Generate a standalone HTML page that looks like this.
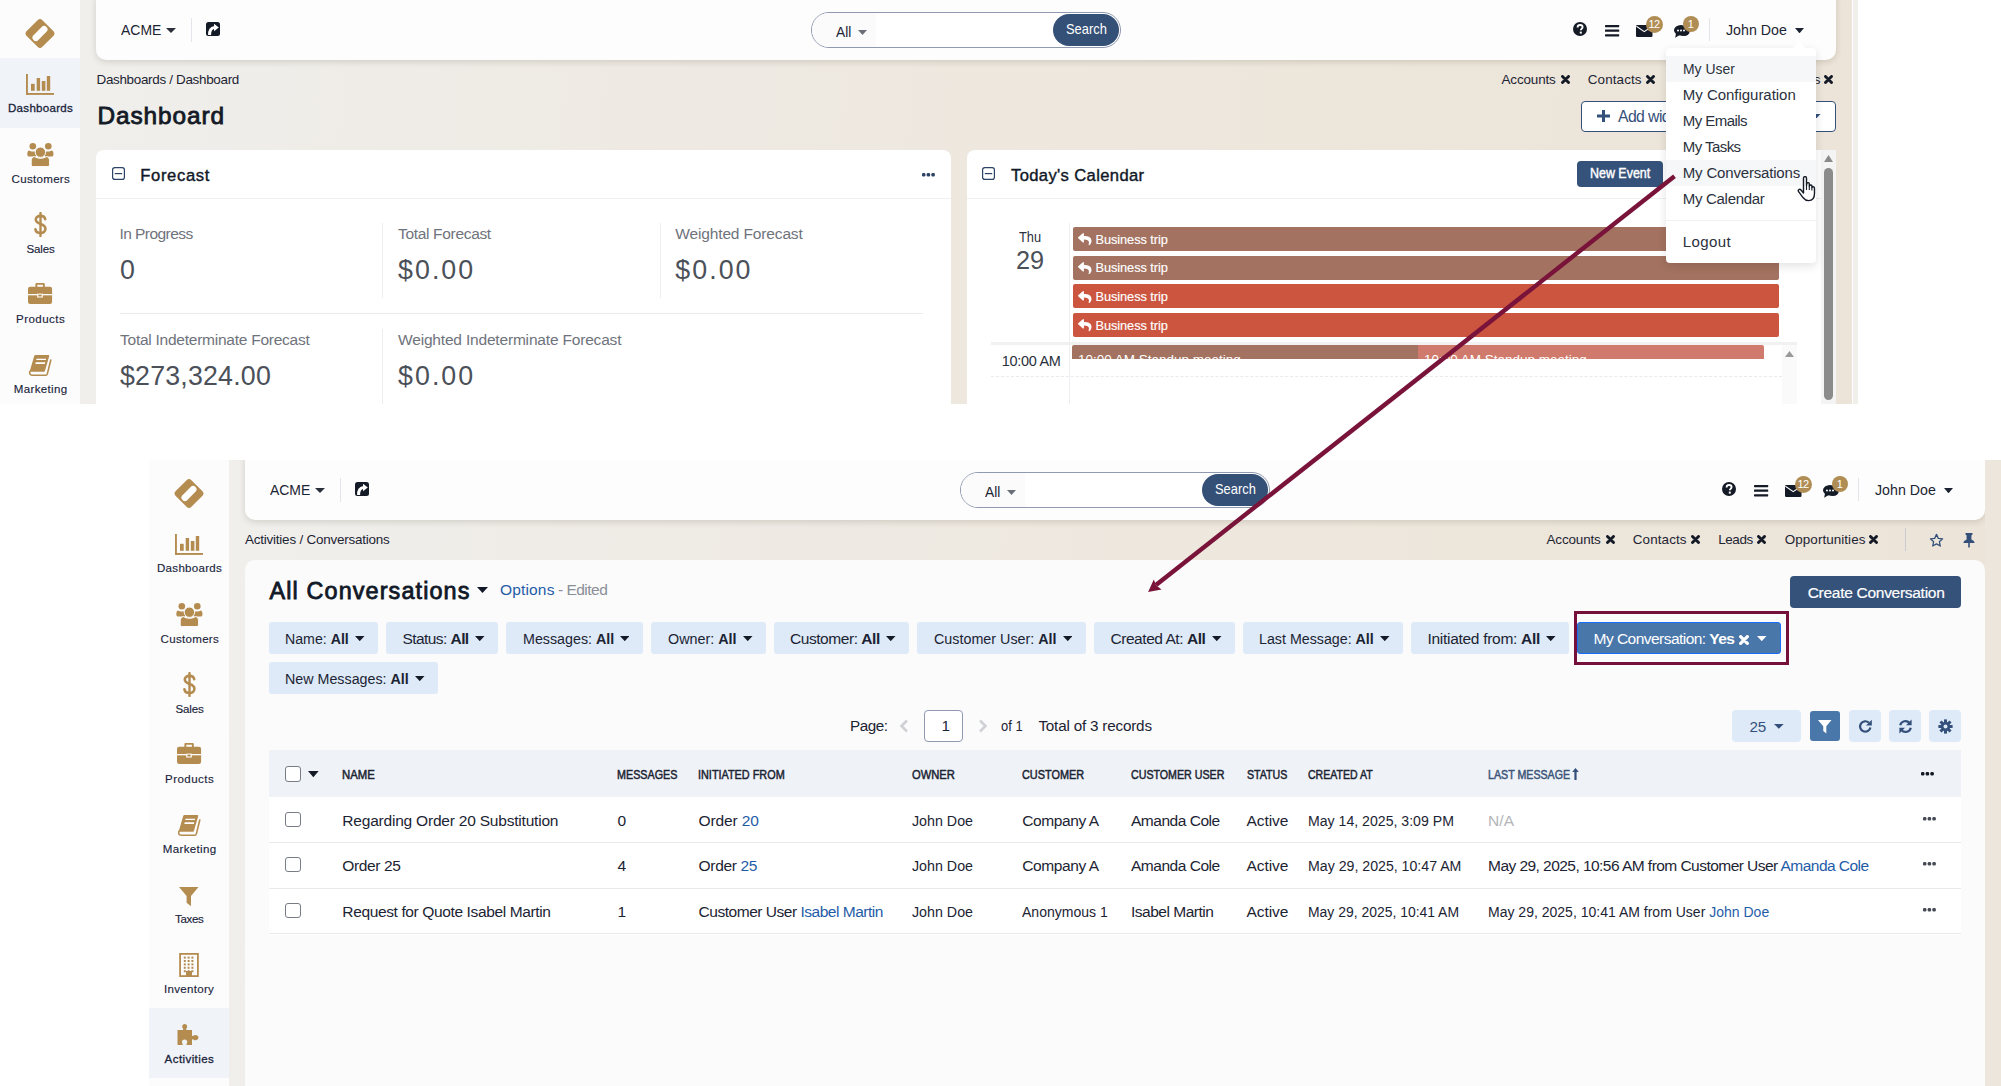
<!DOCTYPE html><html><head><meta charset="utf-8"><style>
*{margin:0;padding:0}
html,body{width:2001px;height:1086px;overflow:hidden;background:#ffffff;font-family:"Liberation Sans",sans-serif}
.r{position:absolute;display:block}
.t{position:absolute;white-space:nowrap;font-family:"Liberation Sans",sans-serif}
.t b{font-weight:700}
.shot{position:absolute;overflow:hidden}
.lk{color:#1f5ca8}
</style></head><body><div class="shot" style="left:0;top:0;width:1852px;height:404px;"><div class="r" style="left:80px;top:0px;width:1772px;height:404px;background:linear-gradient(95deg,#f0efec 0%,#eee9e2 35%,#ede6db 70%,#ece4d8 100%);"></div><div class="r" style="left:0px;top:0px;width:80px;height:404px;background:#fcfcfd;"></div><svg class="r" style="left:25px;top:18px" width="30" height="31" viewBox="0 0 30 31"><g transform="translate(15 15.5) rotate(45)"><rect x="-11.1" y="-11.1" width="22.2" height="22.2" rx="3.4" fill="#b48c50"/><rect x="-3.4" y="-9.2" width="6.8" height="18.4" rx="3.4" fill="#fff"/></g></svg><div class="r" style="left:0px;top:57.5px;width:80px;height:70.8px;background:#f0f3f8;"></div><svg class="r" style="left:26px;top:74px" width="28" height="21" viewBox="0 0 28 21"><rect x="0" y="0" width="1.9" height="21" fill="#b48c50"/><rect x="0" y="19" width="28" height="1.9" fill="#b48c50"/><rect x="5" y="9.8" width="3.7" height="7" fill="#b48c50"/><rect x="10.7" y="4" width="3.4" height="12.8" fill="#b48c50"/><rect x="15.8" y="7" width="3.6" height="9.8" fill="#b48c50"/><rect x="20.8" y="2" width="3.4" height="14.8" fill="#b48c50"/></svg><div id="t1" class="t " style="left:8.00px;top:103.01px;font-size:11.55px;line-height:11.55px;color:#19233a;-webkit-text-stroke:0.29px #19233a;letter-spacing:0.281px;">Dashboards</div><svg class="r" style="left:26.5px;top:141.5px" width="27" height="25" viewBox="0 0 27 25"><circle cx="5.8" cy="4.3" r="3.3" fill="#b48c50"/><circle cx="21.3" cy="4.3" r="3.3" fill="#b48c50"/><path d="M0.3 12.5 C0.3 10.2 1 8.6 2.2 8.6 C3 9.3 4.5 9.6 6 9.6 C7.3 9.6 8.4 9.4 9 8.9 C9.6 9.8 9.8 11 9.8 12.5 C9.8 13.7 9 14.6 7.8 14.6 H2.3 C1.1 14.6 0.3 13.7 0.3 12.5 Z" fill="#b48c50"/><path d="M26.5 12.5 C26.5 10.2 25.8 8.6 24.6 8.6 C23.8 9.3 22.3 9.6 20.8 9.6 C19.5 9.6 18.4 9.4 17.8 8.9 C17.2 9.8 17 11 17 12.5 C17 13.7 17.8 14.6 19 14.6 H24.5 C25.7 14.6 26.5 13.7 26.5 12.5 Z" fill="#b48c50"/><path d="M4.2 22.3 V18.8 C4.2 16.4 5.4 14.8 7.4 14.6 C9 15.6 11.1 16.3 13.4 16.3 C15.7 16.3 17.8 15.6 19.4 14.6 C21.4 14.8 22.6 16.4 22.6 18.8 V22.3 C22.6 23.6 21.8 24.6 20.4 24.6 H6.4 C5 24.6 4.2 23.6 4.2 22.3 Z" fill="#b48c50" stroke="#fff" stroke-width="1"/><circle cx="13.4" cy="10.2" r="5.2" fill="#b48c50" stroke="#fff" stroke-width="1"/></svg><div id="t2" class="t " style="left:11.60px;top:174.01px;font-size:11.55px;line-height:11.55px;color:#19233a;-webkit-text-stroke:0.14px #19233a;letter-spacing:0.295px;">Customers</div><svg class="r" style="left:33.5px;top:212px" width="13" height="25" viewBox="0 0 13 25"><path d="M6.5 1 V24" stroke="#b48c50" stroke-width="2.4" stroke-linecap="round"/><path d="M11.2 7.2 C10.8 5 9 3.9 6.4 3.9 C3.6 3.9 1.8 5.4 1.8 7.6 C1.8 10.2 4.2 11.2 6.6 12 C9.2 12.8 11.4 14 11.4 16.8 C11.4 19.4 9.2 21 6.5 21 C3.6 21 1.8 19.6 1.4 17.2" fill="none" stroke="#b48c50" stroke-width="2.6" stroke-linecap="round"/></svg><div id="t3" class="t " style="left:26.40px;top:244.01px;font-size:11.55px;line-height:11.55px;color:#19233a;-webkit-text-stroke:0.14px #19233a;letter-spacing:-0.148px;">Sales</div><svg class="r" style="left:27.8px;top:283px" width="25" height="21" viewBox="0 0 25 21"><path d="M7.4 4 V1.2 C7.4 0.5 7.9 0 8.6 0 H15.5 C16.2 0 16.8 0.5 16.8 1.2 V4 H14.9 V1.8 H9.3 V4 Z" fill="#b48c50"/><rect x="0" y="3.7" width="24.1" height="17.3" rx="2.2" fill="#b48c50"/><rect x="0" y="11" width="24.1" height="1.3" fill="#fff"/><rect x="9.2" y="10.6" width="5.6" height="3.9" fill="#fff"/><rect x="10.4" y="11.6" width="3.2" height="1.9" fill="#b48c50"/></svg><div id="t4" class="t " style="left:16.00px;top:314.01px;font-size:11.55px;line-height:11.55px;color:#19233a;-webkit-text-stroke:0.14px #19233a;letter-spacing:0.461px;">Products</div><svg class="r" style="left:29px;top:355px" width="23" height="21.5" viewBox="0 0 23 21.5"><path d="M5.2 0.9 C5.4 0.3 5.9 0 6.5 0 H19.2 C19.9 0 20.4 0.6 20.2 1.3 L15.9 16.1 C15.8 16.5 15.4 16.8 15 16.8 H0.6 Z" fill="#b48c50"/><path d="M7.6 3.8 H17.2 L16.8 5.1 H7.2 Z" fill="#fff"/><path d="M6.8 7.2 H16.3 L15.8 8.9 H6.3 Z" fill="#fff"/><path d="M0.9 16.4 C0.2 18.8 1.2 20.2 3 20.2 H16.8 C17.6 20.2 18.1 19.8 18.3 19.1 L21.8 5" fill="none" stroke="#b48c50" stroke-width="1.6" stroke-linecap="round"/></svg><div id="t5" class="t " style="left:13.80px;top:384.01px;font-size:11.55px;line-height:11.55px;color:#19233a;-webkit-text-stroke:0.14px #19233a;letter-spacing:0.325px;">Marketing</div><div class="r" style="left:96px;top:-10px;width:1740px;height:70px;background:#fdfdfd;border-radius:10px;box-shadow:0 2px 6px rgba(80,70,50,0.18)"></div><div id="t6" class="t " style="left:120.50px;top:22.01px;font-size:15.54px;line-height:15.54px;color:#1c2433;transform:scaleX(0.8981);transform-origin:0 0;">ACME</div><svg class="r" style="left:166px;top:28px" width="10" height="5" viewBox="0 0 10 5" preserveAspectRatio="none"><path d="M0 0 H10 L5 5 Z" fill="#2a2f3a"/></svg><div class="r" style="left:191px;top:18px;width:1px;height:23.5px;background:#e3e5ea;"></div><svg class="r" style="left:205.5px;top:22px" width="14" height="14" viewBox="0 0 14 14"><rect x="0" y="0" width="14" height="14" rx="2.5" fill="#141a26"/><path d="M8 1.7 L12.8 5.5 L8 9.3 Z" fill="#fff"/><path d="M3.6 13 C3.4 8.6 5 5.5 9 5.5" fill="none" stroke="#fff" stroke-width="3"/></svg><div class="r" style="left:811px;top:12px;width:310px;height:36px;box-sizing:border-box;border:1px solid #8f9ab0;border-radius:18px;background:#fff"></div><div class="r" style="left:812px;top:13px;width:64px;height:34px;background:#fbfbfc;border-radius:17px 0 0 17px"></div><div id="t7" class="t " style="left:835.50px;top:24.01px;font-size:15.54px;line-height:15.54px;color:#1c2433;transform:scaleX(0.8862);transform-origin:0 0;">All</div><svg class="r" style="left:857.8px;top:29.5px" width="9" height="5" viewBox="0 0 10 5" preserveAspectRatio="none"><path d="M0 0 H10 L5 5 Z" fill="#6b6f78"/></svg><div class="r" style="left:1053px;top:14px;width:66px;height:32px;border-radius:16px;background:#355077"></div><div id="t8" class="t " style="left:1066.00px;top:23.01px;font-size:13.86px;line-height:13.86px;color:#ffffff;transform:scaleX(0.9289);transform-origin:0 0;">Search</div><svg class="r" style="left:1573.2px;top:22.2px" width="14" height="14" viewBox="0 0 14 14"><circle cx="7" cy="7" r="7" fill="#141a26"/><path d="M4.6 5.4 C4.6 3.9 5.7 3 7.1 3 C8.6 3 9.6 3.9 9.6 5.1 C9.6 6.8 7.8 6.9 7.8 8.3" fill="none" stroke="#fff" stroke-width="1.9"/><rect x="6.8" y="9.6" width="2" height="2" fill="#fff"/></svg><svg class="r" style="left:1605px;top:24.7px" width="15" height="12" viewBox="0 0 15 12"><rect x="0" y="0" width="14.2" height="2.2" rx="0.6" fill="#141a26"/><rect x="0" y="4.6" width="14.2" height="2.2" rx="0.6" fill="#141a26"/><rect x="0" y="9.2" width="14.2" height="2.2" rx="0.6" fill="#141a26"/></svg><svg class="r" style="left:1635.7px;top:24.7px" width="17" height="12" viewBox="0 0 17 12"><rect x="0" y="0" width="16.5" height="12" rx="1.2" fill="#141a26"/><path d="M0.4 1.2 L8.25 6.6 L16.1 1.2" fill="none" stroke="#fff" stroke-width="1.1"/></svg><div class="r" style="left:1645.5px;top:15.8px;width:17.0px;height:17.0px;border-radius:50%;background:#b08d54;color:#fff;font-size:11px;line-height:17.0px;text-align:center;letter-spacing:-0.5px">12</div><svg class="r" style="left:1674px;top:24.7px" width="16" height="13" viewBox="0 0 16 13"><ellipse cx="7" cy="5.3" rx="7" ry="5.3" fill="#141a26"/><path d="M2 8.5 L1.2 12.8 L6 9.8 Z" fill="#141a26"/><ellipse cx="10" cy="6.5" rx="5.7" ry="4.6" fill="#141a26"/><circle cx="4" cy="5.6" r="1" fill="#fff"/><circle cx="7" cy="5.6" r="1" fill="#fff"/><circle cx="10" cy="5.6" r="1" fill="#fff"/></svg><div class="r" style="left:1682.5px;top:16.3px;width:16px;height:16px;border-radius:50%;background:#b08d54;color:#fff;font-size:11px;line-height:16px;text-align:center;letter-spacing:-0.5px">1</div><div class="r" style="left:1709px;top:18px;width:1px;height:23px;background:#e3e5ea;"></div><div id="t9" class="t " style="left:1725.70px;top:22.01px;font-size:15.54px;line-height:15.54px;color:#1c2433;transform:scaleX(0.9143);transform-origin:0 0;">John Doe</div><svg class="r" style="left:1794.6px;top:27.7px" width="9" height="5.3" viewBox="0 0 10 5" preserveAspectRatio="none"><path d="M0 0 H10 L5 5 Z" fill="#1c2433"/></svg><div id="t10" class="t " style="left:96.50px;top:73.01px;font-size:13.44px;line-height:13.44px;color:#1c2433;letter-spacing:-0.315px;">Dashboards / Dashboard</div><div id="t11" class="t " style="left:97.40px;top:104.01px;font-size:24.36px;line-height:24.36px;color:#141a26;-webkit-text-stroke:0.85px #141a26;letter-spacing:0.929px;">Dashboard</div><div id="t12" class="t " style="left:1501.50px;top:73.01px;font-size:13.44px;line-height:13.44px;color:#1c2433;letter-spacing:-0.141px;">Accounts</div><svg class="r" style="left:1560.5px;top:75.3px" width="9" height="9" viewBox="0 0 9 9"><path d="M1.5 1.5 L7.5 7.5 M7.5 1.5 L1.5 7.5" stroke="#141a26" stroke-width="2.9" stroke-linecap="round"/></svg><div id="t13" class="t " style="left:1587.80px;top:73.01px;font-size:13.44px;line-height:13.44px;color:#1c2433;letter-spacing:0.108px;">Contacts</div><svg class="r" style="left:1645.7px;top:75.3px" width="9" height="9" viewBox="0 0 9 9"><path d="M1.5 1.5 L7.5 7.5 M7.5 1.5 L1.5 7.5" stroke="#141a26" stroke-width="2.9" stroke-linecap="round"/></svg><div id="t14" class="t " style="left:1673.20px;top:73.01px;font-size:13.44px;line-height:13.44px;color:#1c2433;letter-spacing:-0.406px;">Leads</div><svg class="r" style="left:1712.2px;top:75.3px" width="9" height="9" viewBox="0 0 9 9"><path d="M1.5 1.5 L7.5 7.5 M7.5 1.5 L1.5 7.5" stroke="#141a26" stroke-width="2.9" stroke-linecap="round"/></svg><div id="t15" class="t " style="left:1739.80px;top:73.01px;font-size:13.44px;line-height:13.44px;color:#1c2433;letter-spacing:0.056px;">Opportunities</div><svg class="r" style="left:1824.2px;top:75.3px" width="9" height="9" viewBox="0 0 9 9"><path d="M1.5 1.5 L7.5 7.5 M7.5 1.5 L1.5 7.5" stroke="#141a26" stroke-width="2.9" stroke-linecap="round"/></svg><div class="r" style="left:1580.5px;top:100.5px;width:255px;height:31px;box-sizing:border-box;border:1px solid #34507a;border-radius:4px;background:#fff"></div><svg class="r" style="left:1597px;top:110px" width="13" height="12" viewBox="0 0 13 12"><rect x="5" y="0" width="3" height="12" fill="#34507a"/><rect x="0" y="4.5" width="13" height="3" fill="#34507a"/></svg><div id="t16" class="t " style="left:1618.00px;top:109.00px;font-size:15.75px;line-height:15.75px;color:#34507a;letter-spacing:-0.570px;">Add widget</div><svg class="r" style="left:1812px;top:113.5px" width="8.5" height="4.6" viewBox="0 0 10 5" preserveAspectRatio="none"><path d="M0 0 H10 L5 5 Z" fill="#34507a"/></svg><div class="r" style="left:96px;top:150px;width:855px;height:300px;background:#fff;border-radius:8px"></div><svg class="r" style="left:112px;top:167.2px" width="13" height="13" viewBox="0 0 13 13"><rect x="0.6" y="0.6" width="11.8" height="11.8" rx="2.2" fill="none" stroke="#2c4366" stroke-width="1.2"/><rect x="2.8" y="6" width="7.4" height="1.2" fill="#2c4366"/></svg><div id="t17" class="t " style="left:140.30px;top:168.00px;font-size:16.59px;line-height:16.59px;color:#111827;-webkit-text-stroke:0.41px #111827;letter-spacing:0.642px;">Forecast</div><svg class="r" style="left:922px;top:172.5px" width="13" height="4" viewBox="0 0 13 4"><rect x="0" y="0" width="3.4" height="3.4" rx="1.2" fill="#2c4366"/><rect x="4.7" y="0" width="3.4" height="3.4" rx="1.2" fill="#2c4366"/><rect x="9.4" y="0" width="3.4" height="3.4" rx="1.2" fill="#2c4366"/></svg><div class="r" style="left:96px;top:198px;width:855px;height:1px;background:#eff0f2;"></div><div id="t18" class="t " style="left:119.40px;top:226.01px;font-size:15.54px;line-height:15.54px;color:#6f737c;letter-spacing:-0.562px;">In Progress</div><div id="t19" class="t " style="left:120.00px;top:257.00px;font-size:26.78px;line-height:26.78px;color:#4b5059;">0</div><div class="r" style="left:382px;top:223px;width:1px;height:75px;background:#eceef1;"></div><div id="t20" class="t " style="left:398.00px;top:226.01px;font-size:15.54px;line-height:15.54px;color:#6f737c;letter-spacing:-0.335px;">Total Forecast</div><div id="t21" class="t " style="left:398.00px;top:257.00px;font-size:26.78px;line-height:26.78px;color:#4b5059;letter-spacing:2.053px;">$0.00</div><div class="r" style="left:659.5px;top:223px;width:1px;height:75px;background:#eceef1;"></div><div id="t22" class="t " style="left:675.30px;top:226.01px;font-size:15.54px;line-height:15.54px;color:#6f737c;letter-spacing:-0.161px;">Weighted Forecast</div><div id="t23" class="t " style="left:675.30px;top:257.00px;font-size:26.78px;line-height:26.78px;color:#4b5059;letter-spacing:2.053px;">$0.00</div><div class="r" style="left:120px;top:313px;width:803px;height:1px;background:#e9ebee;"></div><div id="t24" class="t " style="left:120.00px;top:332.01px;font-size:15.54px;line-height:15.54px;color:#6f737c;letter-spacing:-0.261px;">Total Indeterminate Forecast</div><div id="t25" class="t " style="left:120.00px;top:363.00px;font-size:26.78px;line-height:26.78px;color:#4b5059;letter-spacing:0.195px;">$273,324.00</div><div class="r" style="left:382px;top:329px;width:1px;height:75px;background:#eceef1;"></div><div id="t26" class="t " style="left:398.00px;top:332.01px;font-size:15.54px;line-height:15.54px;color:#6f737c;letter-spacing:-0.195px;">Weighted Indeterminate Forecast</div><div id="t27" class="t " style="left:398.00px;top:363.00px;font-size:26.78px;line-height:26.78px;color:#4b5059;letter-spacing:2.053px;">$0.00</div><div class="r" style="left:967px;top:150px;width:869px;height:300px;background:#fff;border-radius:8px"></div><svg class="r" style="left:982px;top:167.4px" width="13" height="13" viewBox="0 0 13 13"><rect x="0.6" y="0.6" width="11.8" height="11.8" rx="2.2" fill="none" stroke="#2c4366" stroke-width="1.2"/><rect x="2.8" y="6" width="7.4" height="1.2" fill="#2c4366"/></svg><div id="t28" class="t " style="left:1011.00px;top:168.00px;font-size:16.59px;line-height:16.59px;color:#111827;-webkit-text-stroke:0.41px #111827;letter-spacing:0.368px;">Today's Calendar</div><div class="r" style="left:1577px;top:161px;width:86px;height:26px;background:#34527a;border-radius:4px"></div><div id="t29" class="t " style="left:1590.00px;top:166.00px;font-size:14.18px;line-height:14.18px;color:#fff;-webkit-text-stroke:0.43px #fff;transform:scaleX(0.8784);transform-origin:0 0;">New Event</div><div class="r" style="left:967px;top:198px;width:855px;height:1px;background:#eff0f2;"></div><div id="t30" class="t " style="left:1019.00px;top:230.00px;font-size:14.49px;line-height:14.49px;color:#2a303c;transform:scaleX(0.8851);transform-origin:0 0;">Thu</div><div id="t31" class="t " style="left:1016.00px;top:247.00px;font-size:26.57px;line-height:26.57px;color:#4b5059;transform:scaleX(0.951);transform-origin:0 0;">29</div><div class="r" style="left:1069px;top:223px;width:1px;height:181px;background:#eceef1;"></div><div class="r" style="left:1073px;top:227px;width:706px;height:24.2px;background:#a37260;border-radius:2px"></div><svg class="r" style="left:1078px;top:233.2px" width="13.5" height="12.5" viewBox="0 30 512 460" preserveAspectRatio="none"><path d="M8.309 189.836L184.313 37.851C199.719 24.546 224 35.347 224 56.015v80.053c160.629 1.839 288 34.032 288 186.258 0 61.441-39.581 122.309-83.333 154.132-13.653 9.931-33.111-2.533-28.077-18.631 45.344-145.012-21.507-183.51-176.59-185.742V360c0 20.7-24.3 31.453-39.687 18.164l-176.004-152c-11.071-9.562-11.086-26.753 0-36.328z" fill="#fff"/></svg><div id="t32" class="t " style="left:1095.50px;top:234.00px;font-size:12.81px;line-height:12.81px;color:#fff;-webkit-text-stroke:0.15px #fff;letter-spacing:-0.081px;">Business trip</div><div class="r" style="left:1073px;top:255.7px;width:706px;height:24.2px;background:#a37260;border-radius:2px"></div><svg class="r" style="left:1078px;top:261.9px" width="13.5" height="12.5" viewBox="0 30 512 460" preserveAspectRatio="none"><path d="M8.309 189.836L184.313 37.851C199.719 24.546 224 35.347 224 56.015v80.053c160.629 1.839 288 34.032 288 186.258 0 61.441-39.581 122.309-83.333 154.132-13.653 9.931-33.111-2.533-28.077-18.631 45.344-145.012-21.507-183.51-176.59-185.742V360c0 20.7-24.3 31.453-39.687 18.164l-176.004-152c-11.071-9.562-11.086-26.753 0-36.328z" fill="#fff"/></svg><div id="t33" class="t " style="left:1095.50px;top:262.00px;font-size:12.81px;line-height:12.81px;color:#fff;-webkit-text-stroke:0.15px #fff;letter-spacing:-0.081px;">Business trip</div><div class="r" style="left:1073px;top:284.3px;width:706px;height:24.2px;background:#cc5540;border-radius:2px"></div><svg class="r" style="left:1078px;top:290.5px" width="13.5" height="12.5" viewBox="0 30 512 460" preserveAspectRatio="none"><path d="M8.309 189.836L184.313 37.851C199.719 24.546 224 35.347 224 56.015v80.053c160.629 1.839 288 34.032 288 186.258 0 61.441-39.581 122.309-83.333 154.132-13.653 9.931-33.111-2.533-28.077-18.631 45.344-145.012-21.507-183.51-176.59-185.742V360c0 20.7-24.3 31.453-39.687 18.164l-176.004-152c-11.071-9.562-11.086-26.753 0-36.328z" fill="#fff"/></svg><div id="t34" class="t " style="left:1095.50px;top:291.00px;font-size:12.81px;line-height:12.81px;color:#fff;-webkit-text-stroke:0.15px #fff;letter-spacing:-0.081px;">Business trip</div><div class="r" style="left:1073px;top:313.2px;width:706px;height:24.2px;background:#cc5540;border-radius:2px"></div><svg class="r" style="left:1078px;top:319.4px" width="13.5" height="12.5" viewBox="0 30 512 460" preserveAspectRatio="none"><path d="M8.309 189.836L184.313 37.851C199.719 24.546 224 35.347 224 56.015v80.053c160.629 1.839 288 34.032 288 186.258 0 61.441-39.581 122.309-83.333 154.132-13.653 9.931-33.111-2.533-28.077-18.631 45.344-145.012-21.507-183.51-176.59-185.742V360c0 20.7-24.3 31.453-39.687 18.164l-176.004-152c-11.071-9.562-11.086-26.753 0-36.328z" fill="#fff"/></svg><div id="t35" class="t " style="left:1095.50px;top:320.00px;font-size:12.81px;line-height:12.81px;color:#fff;-webkit-text-stroke:0.15px #fff;letter-spacing:-0.081px;">Business trip</div><div class="r" style="left:991px;top:341.5px;width:806px;height:3.5px;background:#f1f1f2;"></div><div id="t36" class="t " style="left:1001.80px;top:354.00px;font-size:14.49px;line-height:14.49px;color:#2a303c;letter-spacing:-0.314px;">10:00 AM</div><div class="r" style="left:1072px;top:345px;width:346px;height:13.5px;background:#a37260;overflow:hidden;border-radius:2px 0 0 0"><div class="t" style="left:6px;top:7.5px;font-size:13.5px;line-height:13.5px;color:#fff">10:00 AM Standup meeting</div></div><div class="r" style="left:1418px;top:345px;width:346px;height:13.5px;background:#cf7a6c;overflow:hidden;border-radius:0 2px 0 0"><div class="t" style="left:6px;top:7.5px;font-size:13.5px;line-height:13.5px;color:#fff">10:00 AM Standup meeting</div></div><div class="r" style="left:1782px;top:345px;width:15px;height:59px;background:#fafafa;"></div><svg class="r" style="left:1784.7px;top:350.7px" width="9" height="6" viewBox="0 0 9 6"><path d="M0 6 L4.5 0 L9 6 Z" fill="#9a9a9a"/></svg><div class="r" style="left:991px;top:376px;width:791px;height:0;border-top:1px dashed #e9eaec"></div><div class="r" style="left:1821px;top:150px;width:15px;height:254px;background:#f4f4f4;"></div><svg class="r" style="left:1823.5px;top:154.5px" width="9" height="7" viewBox="0 0 9 7"><path d="M0 7 L4.5 0 L9 7 Z" fill="#8a8a8a"/></svg><div class="r" style="left:1823.5px;top:168px;width:9px;height:232px;background:#8b8b8b;border-radius:4.5px"></div><div class="r" style="left:1852px;top:0px;width:1px;height:404px;background:#ffffff;"></div></div><div class="r" style="left:1853px;top:0px;width:5px;height:404px;background:#f0efea;"></div><div class="r" style="left:1666px;top:48px;width:150px;height:214.5px;background:#fff;border-radius:4px;box-shadow:0 3px 10px rgba(0,0,0,0.12)"></div><svg class="r" style="left:1792px;top:40px" width="14" height="9" viewBox="0 0 14 9"><path d="M0 9 L7 0.5 L14 9 Z" fill="#fff"/></svg><div class="r" style="left:1666px;top:56px;width:150px;height:25.5px;background:#f6f7f9;"></div><div class="r" style="left:1666px;top:160px;width:150px;height:25.5px;background:#f6f7f9;"></div><div id="t37" class="t " style="left:1682.80px;top:61.01px;font-size:15.02px;line-height:15.02px;color:#2b313d;transform:scaleX(0.9266);transform-origin:0 0;">My User</div><div id="t38" class="t " style="left:1682.80px;top:87.01px;font-size:15.02px;line-height:15.02px;color:#2b313d;letter-spacing:-0.034px;">My Configuration</div><div id="t39" class="t " style="left:1682.80px;top:113.01px;font-size:15.02px;line-height:15.02px;color:#2b313d;letter-spacing:-0.557px;">My Emails</div><div id="t40" class="t " style="left:1682.80px;top:139.01px;font-size:15.02px;line-height:15.02px;color:#2b313d;letter-spacing:-0.573px;">My Tasks</div><div id="t41" class="t " style="left:1682.80px;top:165.01px;font-size:15.02px;line-height:15.02px;color:#2b313d;letter-spacing:-0.185px;">My Conversations</div><div id="t42" class="t " style="left:1682.80px;top:191.01px;font-size:15.02px;line-height:15.02px;color:#2b313d;letter-spacing:-0.313px;">My Calendar</div><div id="t43" class="t " style="left:1682.80px;top:234.01px;font-size:15.02px;line-height:15.02px;color:#2b313d;letter-spacing:0.414px;">Logout</div><div class="r" style="left:1666px;top:220px;width:150px;height:1px;background:#f0f1f3;"></div><svg class="r" style="left:1796px;top:176px" width="22" height="26" viewBox="0 0 22 26"><path d="M7.5 2.2 C7.5 1 8.2 0.6 9 0.6 C9.8 0.6 10.5 1 10.5 2.2 V9.5 L10.8 7.6 C11 6.8 11.5 6.5 12.2 6.6 C12.9 6.7 13.4 7.1 13.3 8 V10 C13.6 9.2 14.1 8.9 14.8 9 C15.5 9.1 16 9.6 15.9 10.4 V11.5 C16.2 10.9 16.7 10.6 17.4 10.8 C18.1 10.9 18.5 11.4 18.5 12.2 V17.5 C18.5 21.6 16.4 24.6 12.6 24.6 C10 24.6 8.6 23.6 7.2 21.8 L2.6 15.6 C2 14.8 2.2 14 2.8 13.6 C3.5 13.1 4.4 13.3 5 14 L7.5 17 Z" fill="#fff" stroke="#141a26" stroke-width="1.4" stroke-linejoin="round"/><path d="M10.5 9.5 V14 M13.3 10 V14 M15.9 11.5 V14.5" stroke="#141a26" stroke-width="1.1"/></svg><div class="shot" style="left:149px;top:460px;width:1852px;height:626px;"><div class="r" style="left:80px;top:0px;width:1772px;height:626px;background:linear-gradient(95deg,#f0efec 0%,#eee9e2 35%,#ede6db 70%,#ece4d8 100%);"></div><div class="r" style="left:0px;top:0px;width:80px;height:626px;background:#fcfcfd;"></div><svg class="r" style="left:25px;top:18px" width="30" height="31" viewBox="0 0 30 31"><g transform="translate(15 15.5) rotate(45)"><rect x="-11.1" y="-11.1" width="22.2" height="22.2" rx="3.4" fill="#b48c50"/><rect x="-3.4" y="-9.2" width="6.8" height="18.4" rx="3.4" fill="#fff"/></g></svg><div class="r" style="left:0px;top:547.5px;width:80px;height:70.8px;background:#f0f3f8;"></div><svg class="r" style="left:26px;top:74px" width="28" height="21" viewBox="0 0 28 21"><rect x="0" y="0" width="1.9" height="21" fill="#b48c50"/><rect x="0" y="19" width="28" height="1.9" fill="#b48c50"/><rect x="5" y="9.8" width="3.7" height="7" fill="#b48c50"/><rect x="10.7" y="4" width="3.4" height="12.8" fill="#b48c50"/><rect x="15.8" y="7" width="3.6" height="9.8" fill="#b48c50"/><rect x="20.8" y="2" width="3.4" height="14.8" fill="#b48c50"/></svg><div id="t44" class="t " style="left:8.00px;top:103.01px;font-size:11.55px;line-height:11.55px;color:#19233a;-webkit-text-stroke:0.14px #19233a;letter-spacing:0.281px;">Dashboards</div><svg class="r" style="left:26.5px;top:141.5px" width="27" height="25" viewBox="0 0 27 25"><circle cx="5.8" cy="4.3" r="3.3" fill="#b48c50"/><circle cx="21.3" cy="4.3" r="3.3" fill="#b48c50"/><path d="M0.3 12.5 C0.3 10.2 1 8.6 2.2 8.6 C3 9.3 4.5 9.6 6 9.6 C7.3 9.6 8.4 9.4 9 8.9 C9.6 9.8 9.8 11 9.8 12.5 C9.8 13.7 9 14.6 7.8 14.6 H2.3 C1.1 14.6 0.3 13.7 0.3 12.5 Z" fill="#b48c50"/><path d="M26.5 12.5 C26.5 10.2 25.8 8.6 24.6 8.6 C23.8 9.3 22.3 9.6 20.8 9.6 C19.5 9.6 18.4 9.4 17.8 8.9 C17.2 9.8 17 11 17 12.5 C17 13.7 17.8 14.6 19 14.6 H24.5 C25.7 14.6 26.5 13.7 26.5 12.5 Z" fill="#b48c50"/><path d="M4.2 22.3 V18.8 C4.2 16.4 5.4 14.8 7.4 14.6 C9 15.6 11.1 16.3 13.4 16.3 C15.7 16.3 17.8 15.6 19.4 14.6 C21.4 14.8 22.6 16.4 22.6 18.8 V22.3 C22.6 23.6 21.8 24.6 20.4 24.6 H6.4 C5 24.6 4.2 23.6 4.2 22.3 Z" fill="#b48c50" stroke="#fff" stroke-width="1"/><circle cx="13.4" cy="10.2" r="5.2" fill="#b48c50" stroke="#fff" stroke-width="1"/></svg><div id="t45" class="t " style="left:11.60px;top:174.01px;font-size:11.55px;line-height:11.55px;color:#19233a;-webkit-text-stroke:0.14px #19233a;letter-spacing:0.295px;">Customers</div><svg class="r" style="left:33.5px;top:212px" width="13" height="25" viewBox="0 0 13 25"><path d="M6.5 1 V24" stroke="#b48c50" stroke-width="2.4" stroke-linecap="round"/><path d="M11.2 7.2 C10.8 5 9 3.9 6.4 3.9 C3.6 3.9 1.8 5.4 1.8 7.6 C1.8 10.2 4.2 11.2 6.6 12 C9.2 12.8 11.4 14 11.4 16.8 C11.4 19.4 9.2 21 6.5 21 C3.6 21 1.8 19.6 1.4 17.2" fill="none" stroke="#b48c50" stroke-width="2.6" stroke-linecap="round"/></svg><div id="t46" class="t " style="left:26.40px;top:244.01px;font-size:11.55px;line-height:11.55px;color:#19233a;-webkit-text-stroke:0.14px #19233a;letter-spacing:-0.148px;">Sales</div><svg class="r" style="left:27.8px;top:283px" width="25" height="21" viewBox="0 0 25 21"><path d="M7.4 4 V1.2 C7.4 0.5 7.9 0 8.6 0 H15.5 C16.2 0 16.8 0.5 16.8 1.2 V4 H14.9 V1.8 H9.3 V4 Z" fill="#b48c50"/><rect x="0" y="3.7" width="24.1" height="17.3" rx="2.2" fill="#b48c50"/><rect x="0" y="11" width="24.1" height="1.3" fill="#fff"/><rect x="9.2" y="10.6" width="5.6" height="3.9" fill="#fff"/><rect x="10.4" y="11.6" width="3.2" height="1.9" fill="#b48c50"/></svg><div id="t47" class="t " style="left:16.00px;top:314.01px;font-size:11.55px;line-height:11.55px;color:#19233a;-webkit-text-stroke:0.14px #19233a;letter-spacing:0.461px;">Products</div><svg class="r" style="left:29px;top:355px" width="23" height="21.5" viewBox="0 0 23 21.5"><path d="M5.2 0.9 C5.4 0.3 5.9 0 6.5 0 H19.2 C19.9 0 20.4 0.6 20.2 1.3 L15.9 16.1 C15.8 16.5 15.4 16.8 15 16.8 H0.6 Z" fill="#b48c50"/><path d="M7.6 3.8 H17.2 L16.8 5.1 H7.2 Z" fill="#fff"/><path d="M6.8 7.2 H16.3 L15.8 8.9 H6.3 Z" fill="#fff"/><path d="M0.9 16.4 C0.2 18.8 1.2 20.2 3 20.2 H16.8 C17.6 20.2 18.1 19.8 18.3 19.1 L21.8 5" fill="none" stroke="#b48c50" stroke-width="1.6" stroke-linecap="round"/></svg><div id="t48" class="t " style="left:13.80px;top:384.01px;font-size:11.55px;line-height:11.55px;color:#19233a;-webkit-text-stroke:0.14px #19233a;letter-spacing:0.325px;">Marketing</div><svg class="r" style="left:30px;top:426.7px" width="19.5" height="19.2" viewBox="0 0 19.5 19.2"><path d="M0 0 H19.5 L12 9 V19.2 L7.6 15.8 V9 Z" fill="#b48c50"/></svg><div id="t49" class="t " style="left:26.00px;top:454.01px;font-size:11.55px;line-height:11.55px;color:#19233a;-webkit-text-stroke:0.14px #19233a;letter-spacing:-0.345px;">Taxes</div><svg class="r" style="left:30px;top:493px" width="20" height="24" viewBox="0 0 19.6 24"><rect x="0.9" y="0.9" width="17.8" height="22.2" fill="none" stroke="#b48c50" stroke-width="1.8"/><rect x="4.6" y="3.6" width="2" height="2" fill="#b48c50"/><rect x="8.4" y="3.6" width="2" height="2" fill="#b48c50"/><rect x="12.2" y="3.6" width="2" height="2" fill="#b48c50"/><rect x="4.6" y="7.0" width="2" height="2" fill="#b48c50"/><rect x="8.4" y="7.0" width="2" height="2" fill="#b48c50"/><rect x="12.2" y="7.0" width="2" height="2" fill="#b48c50"/><rect x="4.6" y="10.4" width="2" height="2" fill="#b48c50"/><rect x="8.4" y="10.4" width="2" height="2" fill="#b48c50"/><rect x="12.2" y="10.4" width="2" height="2" fill="#b48c50"/><rect x="4.6" y="13.8" width="2" height="2" fill="#b48c50"/><rect x="8.4" y="13.8" width="2" height="2" fill="#b48c50"/><rect x="12.2" y="13.8" width="2" height="2" fill="#b48c50"/><rect x="4.6" y="17.2" width="2" height="2" fill="#b48c50"/><rect x="8.4" y="17.2" width="2" height="2" fill="#b48c50"/><rect x="12.2" y="17.2" width="2" height="2" fill="#b48c50"/><rect x="6.8" y="18" width="6" height="5" fill="#b48c50"/></svg><div id="t50" class="t " style="left:15.00px;top:524.01px;font-size:11.55px;line-height:11.55px;color:#19233a;-webkit-text-stroke:0.14px #19233a;letter-spacing:0.286px;">Inventory</div><svg class="r" style="left:28px;top:563.5px" width="23" height="21" viewBox="0 0 23 21"><path d="M0.5 6 H5.5 C6.2 6 6.5 5.3 6.1 4.7 C5.4 3.9 5.2 3 5.2 2.5 C5.2 1 6.3 0 7.7 0 C9.1 0 10.2 1 10.2 2.5 C10.2 3 10 3.9 9.3 4.7 C8.9 5.3 9.2 6 9.9 6 H15 V11.2 C15 11.9 15.7 12.2 16.3 11.8 C17 11.2 17.9 11 18.4 11 C20 11 21.5 12 21.5 13.6 C21.5 15.2 20 16.2 18.4 16.2 C17.9 16.2 17 16 16.3 15.4 C15.7 15 15 15.3 15 16 V21 H10.2 C9.5 21 9.2 20.3 9.6 19.7 C10.1 19.1 10.3 18.3 10.3 17.8 C10.3 16.3 9.1 15.4 7.6 15.4 C6.1 15.4 4.9 16.3 4.9 17.8 C4.9 18.3 5.1 19.1 5.6 19.7 C6 20.3 5.7 21 5 21 H0.5 Z" fill="#b48c50"/></svg><div id="t51" class="t " style="left:15.60px;top:594.01px;font-size:11.55px;line-height:11.55px;color:#19233a;-webkit-text-stroke:0.29px #19233a;letter-spacing:0.405px;">Activities</div><div class="r" style="left:96px;top:-10px;width:1740px;height:70px;background:#fdfdfd;border-radius:10px;box-shadow:0 2px 6px rgba(80,70,50,0.18)"></div><div id="t52" class="t " style="left:120.50px;top:22.01px;font-size:15.54px;line-height:15.54px;color:#1c2433;transform:scaleX(0.898);transform-origin:0 0;">ACME</div><svg class="r" style="left:166px;top:28px" width="10" height="5" viewBox="0 0 10 5" preserveAspectRatio="none"><path d="M0 0 H10 L5 5 Z" fill="#2a2f3a"/></svg><div class="r" style="left:191px;top:18px;width:1px;height:23.5px;background:#e3e5ea;"></div><svg class="r" style="left:205.5px;top:22px" width="14" height="14" viewBox="0 0 14 14"><rect x="0" y="0" width="14" height="14" rx="2.5" fill="#141a26"/><path d="M8 1.7 L12.8 5.5 L8 9.3 Z" fill="#fff"/><path d="M3.6 13 C3.4 8.6 5 5.5 9 5.5" fill="none" stroke="#fff" stroke-width="3"/></svg><div class="r" style="left:811px;top:12px;width:310px;height:36px;box-sizing:border-box;border:1px solid #8f9ab0;border-radius:18px;background:#fff"></div><div class="r" style="left:812px;top:13px;width:64px;height:34px;background:#fbfbfc;border-radius:17px 0 0 17px"></div><div id="t53" class="t " style="left:835.50px;top:24.01px;font-size:15.54px;line-height:15.54px;color:#1c2433;transform:scaleX(0.8862);transform-origin:0 0;">All</div><svg class="r" style="left:857.8px;top:29.5px" width="9" height="5" viewBox="0 0 10 5" preserveAspectRatio="none"><path d="M0 0 H10 L5 5 Z" fill="#6b6f78"/></svg><div class="r" style="left:1053px;top:14px;width:66px;height:32px;border-radius:16px;background:#355077"></div><div id="t54" class="t " style="left:1066.00px;top:23.01px;font-size:13.86px;line-height:13.86px;color:#ffffff;transform:scaleX(0.9289);transform-origin:0 0;">Search</div><svg class="r" style="left:1573.2px;top:22.2px" width="14" height="14" viewBox="0 0 14 14"><circle cx="7" cy="7" r="7" fill="#141a26"/><path d="M4.6 5.4 C4.6 3.9 5.7 3 7.1 3 C8.6 3 9.6 3.9 9.6 5.1 C9.6 6.8 7.8 6.9 7.8 8.3" fill="none" stroke="#fff" stroke-width="1.9"/><rect x="6.8" y="9.6" width="2" height="2" fill="#fff"/></svg><svg class="r" style="left:1605px;top:24.7px" width="15" height="12" viewBox="0 0 15 12"><rect x="0" y="0" width="14.2" height="2.2" rx="0.6" fill="#141a26"/><rect x="0" y="4.6" width="14.2" height="2.2" rx="0.6" fill="#141a26"/><rect x="0" y="9.2" width="14.2" height="2.2" rx="0.6" fill="#141a26"/></svg><svg class="r" style="left:1635.7px;top:24.7px" width="17" height="12" viewBox="0 0 17 12"><rect x="0" y="0" width="16.5" height="12" rx="1.2" fill="#141a26"/><path d="M0.4 1.2 L8.25 6.6 L16.1 1.2" fill="none" stroke="#fff" stroke-width="1.1"/></svg><div class="r" style="left:1645.5px;top:15.8px;width:17.0px;height:17.0px;border-radius:50%;background:#b08d54;color:#fff;font-size:11px;line-height:17.0px;text-align:center;letter-spacing:-0.5px">12</div><svg class="r" style="left:1674px;top:24.7px" width="16" height="13" viewBox="0 0 16 13"><ellipse cx="7" cy="5.3" rx="7" ry="5.3" fill="#141a26"/><path d="M2 8.5 L1.2 12.8 L6 9.8 Z" fill="#141a26"/><ellipse cx="10" cy="6.5" rx="5.7" ry="4.6" fill="#141a26"/><circle cx="4" cy="5.6" r="1" fill="#fff"/><circle cx="7" cy="5.6" r="1" fill="#fff"/><circle cx="10" cy="5.6" r="1" fill="#fff"/></svg><div class="r" style="left:1682.5px;top:16.3px;width:16px;height:16px;border-radius:50%;background:#b08d54;color:#fff;font-size:11px;line-height:16px;text-align:center;letter-spacing:-0.5px">1</div><div class="r" style="left:1709px;top:18px;width:1px;height:23px;background:#e3e5ea;"></div><div id="t55" class="t " style="left:1725.70px;top:22.01px;font-size:15.54px;line-height:15.54px;color:#1c2433;transform:scaleX(0.9143);transform-origin:0 0;">John Doe</div><svg class="r" style="left:1794.6px;top:27.7px" width="9" height="5.3" viewBox="0 0 10 5" preserveAspectRatio="none"><path d="M0 0 H10 L5 5 Z" fill="#1c2433"/></svg><div id="t56" class="t " style="left:96.00px;top:73.01px;font-size:13.44px;line-height:13.44px;color:#1c2433;letter-spacing:-0.213px;">Activities / Conversations</div><div id="t57" class="t " style="left:1397.50px;top:73.01px;font-size:13.44px;line-height:13.44px;color:#1c2433;letter-spacing:-0.141px;">Accounts</div><svg class="r" style="left:1456.5px;top:75.3px" width="9" height="9" viewBox="0 0 9 9"><path d="M1.5 1.5 L7.5 7.5 M7.5 1.5 L1.5 7.5" stroke="#141a26" stroke-width="2.9" stroke-linecap="round"/></svg><div id="t58" class="t " style="left:1483.80px;top:73.01px;font-size:13.44px;line-height:13.44px;color:#1c2433;letter-spacing:0.108px;">Contacts</div><svg class="r" style="left:1541.7px;top:75.3px" width="9" height="9" viewBox="0 0 9 9"><path d="M1.5 1.5 L7.5 7.5 M7.5 1.5 L1.5 7.5" stroke="#141a26" stroke-width="2.9" stroke-linecap="round"/></svg><div id="t59" class="t " style="left:1569.20px;top:73.01px;font-size:13.44px;line-height:13.44px;color:#1c2433;letter-spacing:-0.406px;">Leads</div><svg class="r" style="left:1608.2px;top:75.3px" width="9" height="9" viewBox="0 0 9 9"><path d="M1.5 1.5 L7.5 7.5 M7.5 1.5 L1.5 7.5" stroke="#141a26" stroke-width="2.9" stroke-linecap="round"/></svg><div id="t60" class="t " style="left:1635.80px;top:73.01px;font-size:13.44px;line-height:13.44px;color:#1c2433;letter-spacing:0.056px;">Opportunities</div><svg class="r" style="left:1720.2px;top:75.3px" width="9" height="9" viewBox="0 0 9 9"><path d="M1.5 1.5 L7.5 7.5 M7.5 1.5 L1.5 7.5" stroke="#141a26" stroke-width="2.9" stroke-linecap="round"/></svg><div class="r" style="left:1756px;top:68px;width:1px;height:23px;background:#c9ccd3;"></div><svg class="r" style="left:1780px;top:72.5px" width="15" height="15" viewBox="0 0 24 24"><path d="M12 2.2 L14.9 8.6 L21.8 9.3 L16.6 14 L18.1 20.9 L12 17.4 L5.9 20.9 L7.4 14 L2.2 9.3 L9.1 8.6 Z" fill="none" stroke="#34507a" stroke-width="2" stroke-linejoin="round"/></svg><svg class="r" style="left:1813.5px;top:73px" width="12" height="15" viewBox="0 0 12 15"><path d="M2.5 0 H9.5 V1.6 L8.4 2.4 V6.6 C10.3 7.4 11.6 8.6 11.6 10 H6.8 V15 L6 14 L5.2 15 V10 H0.4 C0.4 8.6 1.7 7.4 3.6 6.6 V2.4 L2.5 1.6 Z" fill="#34507a"/></svg><div class="r" style="left:96px;top:100px;width:1740px;height:600px;background:#fbfbfb;border-radius:10px"></div><div id="t61" class="t " style="left:120.60px;top:120.01px;font-size:23.42px;line-height:23.42px;color:#111827;-webkit-text-stroke:0.82px #111827;letter-spacing:1.104px;">All Conversations</div><svg class="r" style="left:328px;top:126.6px" width="11" height="6" viewBox="0 0 10 5" preserveAspectRatio="none"><path d="M0 0 H10 L5 5 Z" fill="#111827"/></svg><div id="t62" class="t " style="left:351.00px;top:122.01px;font-size:15.54px;line-height:15.54px;color:#1f5ca8;letter-spacing:0.145px;">Options</div><div id="t63" class="t " style="left:409.00px;top:122.01px;font-size:15.54px;line-height:15.54px;color:#8a8e97;letter-spacing:-0.534px;">- Edited</div><div class="r" style="left:1641.3px;top:116.2px;width:170.7px;height:31.7px;background:#34527a;border-radius:4px"></div><div id="t64" class="t " style="left:1658.70px;top:125.01px;font-size:15.54px;line-height:15.54px;color:#ffffff;-webkit-text-stroke:0.19px #ffffff;letter-spacing:-0.298px;">Create Conversation</div><div class="r" style="left:120px;top:162px;width:109px;height:31.6px;background:#deeaf8;border-radius:3px"></div><div id="t65" class="t " style="left:136.00px;top:171.01px;font-size:15.54px;line-height:15.54px;color:#1c2433;transform:scaleX(0.9124);transform-origin:0 0;">Name: <b>All</b></div><svg class="r" style="left:206px;top:175.79999999999995px" width="9.5" height="5.2" viewBox="0 0 10 5" preserveAspectRatio="none"><path d="M0 0 H10 L5 5 Z" fill="#141a26"/></svg><div class="r" style="left:237px;top:162px;width:112px;height:31.6px;background:#deeaf8;border-radius:3px"></div><div id="t66" class="t " style="left:253.40px;top:171.01px;font-size:15.54px;line-height:15.54px;color:#1c2433;letter-spacing:-0.572px;">Status: <b>All</b></div><svg class="r" style="left:326px;top:175.79999999999995px" width="9.5" height="5.2" viewBox="0 0 10 5" preserveAspectRatio="none"><path d="M0 0 H10 L5 5 Z" fill="#141a26"/></svg><div class="r" style="left:357px;top:162px;width:136.5px;height:31.6px;background:#deeaf8;border-radius:3px"></div><div id="t67" class="t " style="left:373.60px;top:171.01px;font-size:15.54px;line-height:15.54px;color:#1c2433;transform:scaleX(0.9186);transform-origin:0 0;">Messages: <b>All</b></div><svg class="r" style="left:470.5px;top:175.79999999999995px" width="9.5" height="5.2" viewBox="0 0 10 5" preserveAspectRatio="none"><path d="M0 0 H10 L5 5 Z" fill="#141a26"/></svg><div class="r" style="left:502px;top:162px;width:115px;height:31.6px;background:#deeaf8;border-radius:3px"></div><div id="t68" class="t " style="left:518.60px;top:171.01px;font-size:15.54px;line-height:15.54px;color:#1c2433;transform:scaleX(0.9241);transform-origin:0 0;">Owner: <b>All</b></div><svg class="r" style="left:594px;top:175.79999999999995px" width="9.5" height="5.2" viewBox="0 0 10 5" preserveAspectRatio="none"><path d="M0 0 H10 L5 5 Z" fill="#141a26"/></svg><div class="r" style="left:625.3px;top:162px;width:134.70000000000005px;height:31.6px;background:#deeaf8;border-radius:3px"></div><div id="t69" class="t " style="left:641.00px;top:171.01px;font-size:15.54px;line-height:15.54px;color:#1c2433;letter-spacing:-0.461px;">Customer: <b>All</b></div><svg class="r" style="left:737px;top:175.79999999999995px" width="9.5" height="5.2" viewBox="0 0 10 5" preserveAspectRatio="none"><path d="M0 0 H10 L5 5 Z" fill="#141a26"/></svg><div class="r" style="left:768px;top:162px;width:168.5px;height:31.6px;background:#deeaf8;border-radius:3px"></div><div id="t70" class="t " style="left:784.80px;top:171.01px;font-size:15.54px;line-height:15.54px;color:#1c2433;transform:scaleX(0.9223);transform-origin:0 0;">Customer User: <b>All</b></div><svg class="r" style="left:913.5px;top:175.79999999999995px" width="9.5" height="5.2" viewBox="0 0 10 5" preserveAspectRatio="none"><path d="M0 0 H10 L5 5 Z" fill="#141a26"/></svg><div class="r" style="left:945px;top:162px;width:141px;height:31.6px;background:#deeaf8;border-radius:3px"></div><div id="t71" class="t " style="left:961.50px;top:171.01px;font-size:15.54px;line-height:15.54px;color:#1c2433;letter-spacing:-0.470px;">Created At: <b>All</b></div><svg class="r" style="left:1063px;top:175.79999999999995px" width="9.5" height="5.2" viewBox="0 0 10 5" preserveAspectRatio="none"><path d="M0 0 H10 L5 5 Z" fill="#141a26"/></svg><div class="r" style="left:1094px;top:162px;width:160px;height:31.6px;background:#deeaf8;border-radius:3px"></div><div id="t72" class="t " style="left:1110.00px;top:171.01px;font-size:15.54px;line-height:15.54px;color:#1c2433;transform:scaleX(0.917);transform-origin:0 0;">Last Message: <b>All</b></div><svg class="r" style="left:1231px;top:175.79999999999995px" width="9.5" height="5.2" viewBox="0 0 10 5" preserveAspectRatio="none"><path d="M0 0 H10 L5 5 Z" fill="#141a26"/></svg><div class="r" style="left:1262px;top:162px;width:158px;height:31.6px;background:#deeaf8;border-radius:3px"></div><div id="t73" class="t " style="left:1278.50px;top:171.01px;font-size:15.54px;line-height:15.54px;color:#1c2433;letter-spacing:-0.303px;">Initiated from: <b>All</b></div><svg class="r" style="left:1397px;top:175.79999999999995px" width="9.5" height="5.2" viewBox="0 0 10 5" preserveAspectRatio="none"><path d="M0 0 H10 L5 5 Z" fill="#141a26"/></svg><div class="r" style="left:120px;top:202.39999999999998px;width:169px;height:31.4px;background:#deeaf8;border-radius:3px"></div><div id="t74" class="t " style="left:136.00px;top:211.01px;font-size:15.54px;line-height:15.54px;color:#1c2433;transform:scaleX(0.9193);transform-origin:0 0;">New Messages: <b>All</b></div><svg class="r" style="left:266px;top:215.79999999999995px" width="9.5" height="5.2" viewBox="0 0 10 5" preserveAspectRatio="none"><path d="M0 0 H10 L5 5 Z" fill="#141a26"/></svg><div class="r" style="left:1428.2px;top:162.10000000000002px;width:203.8px;height:31.7px;box-sizing:border-box;background:#4a77a9;border:1px solid #1a6ef5;border-radius:3px"></div><div id="t75" class="t " style="left:1444.60px;top:171.01px;font-size:15.54px;line-height:15.54px;color:#ffffff;letter-spacing:-0.555px;">My Conversation: <b>Yes</b></div><svg class="r" style="left:1590.3px;top:174.79999999999995px" width="10" height="10" viewBox="0 0 9 9"><path d="M1.5 1.5 L7.5 7.5 M7.5 1.5 L1.5 7.5" stroke="#ffffff" stroke-width="2.9" stroke-linecap="round"/></svg><svg class="r" style="left:1608.3px;top:176px" width="9.5" height="5.2" viewBox="0 0 10 5" preserveAspectRatio="none"><path d="M0 0 H10 L5 5 Z" fill="#ffffff"/></svg><div id="t76" class="t " style="left:701.00px;top:258.01px;font-size:15.23px;line-height:15.23px;color:#1c2433;letter-spacing:-0.446px;">Page:</div><svg class="r" style="left:750.0px;top:259.0px" width="10" height="14" viewBox="0 0 10 14"><path d="M8 1.5 L2.5 7 L8 12.5" fill="none" stroke="#cfd1d5" stroke-width="2.6"/></svg><div class="r" style="left:775.3px;top:250.4px;width:39.2px;height:31.2px;box-sizing:border-box;border:1px solid #8f9ab0;border-radius:4px;background:#fff"></div><div id="t77" class="t " style="left:792.50px;top:258.01px;font-size:15.23px;line-height:15.23px;color:#1c2433;">1</div><svg class="r" style="left:829.4px;top:259.0px" width="10" height="14" viewBox="0 0 10 14"><path d="M2 1.5 L7.5 7 L2 12.5" fill="none" stroke="#cfd1d5" stroke-width="2.6"/></svg><div id="t78" class="t " style="left:851.50px;top:258.01px;font-size:15.23px;line-height:15.23px;color:#1c2433;transform:scaleX(0.8507);transform-origin:0 0;">of 1</div><div id="t79" class="t " style="left:889.40px;top:258.01px;font-size:15.23px;line-height:15.23px;color:#1c2433;letter-spacing:-0.184px;">Total of 3 records</div><div class="r" style="left:1583px;top:250.10000000000002px;width:68.8px;height:31.7px;background:#deeaf8;border-radius:4px"></div><div id="t80" class="t " style="left:1600.60px;top:259.01px;font-size:15.23px;line-height:15.23px;color:#34507a;letter-spacing:-0.231px;">25</div><svg class="r" style="left:1625.3px;top:264px" width="9.7" height="4.8" viewBox="0 0 10 5" preserveAspectRatio="none"><path d="M0 0 H10 L5 5 Z" fill="#34507a"/></svg><div class="r" style="left:1661px;top:251px;width:29.7px;height:30px;background:#4a77a9;border-radius:3px"></div><svg class="r" style="left:1669px;top:260px" width="13.5" height="13.5" viewBox="0 0 19.5 19.2"><path d="M0 0 H19.5 L12 9 V19.2 L7.6 15.8 V9 Z" fill="#ffffff"/></svg><div class="r" style="left:1700px;top:250.10000000000002px;width:31.8px;height:31.7px;background:#deeaf8;border-radius:4px"></div><svg class="r" style="left:1708.5px;top:258.5px" width="15" height="15" viewBox="0 0 15 15"><path d="M12.4 8.5 A5.2 5.2 0 1 1 10.8 3.6" fill="none" stroke="#34507a" stroke-width="2.2"/><path d="M13.8 0.8 V6.6 H8 Z" fill="#34507a"/></svg><div class="r" style="left:1739.8px;top:250.10000000000002px;width:31.8px;height:31.7px;background:#deeaf8;border-radius:4px"></div><svg class="r" style="left:1748.5px;top:258.5px" width="15" height="15" viewBox="0 0 15 15"><path d="M2.2 6.2 A5.4 5.4 0 0 1 11.6 4" fill="none" stroke="#34507a" stroke-width="2.2"/><path d="M13.6 0.6 V6.2 H8 Z" fill="#34507a"/><path d="M12.8 8.8 A5.4 5.4 0 0 1 3.4 11" fill="none" stroke="#34507a" stroke-width="2.2"/><path d="M1.4 14.4 V8.8 H7 Z" fill="#34507a"/></svg><div class="r" style="left:1779.8px;top:250.10000000000002px;width:32.2px;height:31.7px;background:#deeaf8;border-radius:4px"></div><svg class="r" style="left:1788.5px;top:258.5px" width="15" height="15" viewBox="0 0 15 15"><circle cx="7.5" cy="7.5" r="4.6" fill="#34507a"/><rect x="6" y="0.4" width="3" height="3.4" fill="#34507a" transform="rotate(0 7.5 7.5)"/><rect x="6" y="0.4" width="3" height="3.4" fill="#34507a" transform="rotate(45 7.5 7.5)"/><rect x="6" y="0.4" width="3" height="3.4" fill="#34507a" transform="rotate(90 7.5 7.5)"/><rect x="6" y="0.4" width="3" height="3.4" fill="#34507a" transform="rotate(135 7.5 7.5)"/><rect x="6" y="0.4" width="3" height="3.4" fill="#34507a" transform="rotate(180 7.5 7.5)"/><rect x="6" y="0.4" width="3" height="3.4" fill="#34507a" transform="rotate(225 7.5 7.5)"/><rect x="6" y="0.4" width="3" height="3.4" fill="#34507a" transform="rotate(270 7.5 7.5)"/><rect x="6" y="0.4" width="3" height="3.4" fill="#34507a" transform="rotate(315 7.5 7.5)"/><circle cx="7.5" cy="7.5" r="2" fill="#deeaf8"/></svg><div class="r" style="left:120px;top:290px;width:1692.2px;height:47.4px;background:#eff3f8;"></div><div class="r" style="left:136.3px;top:306.4px;width:15.7px;height:15.4px;box-sizing:border-box;border:1px solid #777c87;border-radius:3px;background:#fff"></div><svg class="r" style="left:159.3px;top:311.4px" width="10.7" height="6.2" viewBox="0 0 10 5" preserveAspectRatio="none"><path d="M0 0 H10 L5 5 Z" fill="#141a26"/></svg><div id="t81" class="t " style="left:193.30px;top:309.00px;font-size:12.81px;line-height:12.81px;color:#1c2433;-webkit-text-stroke:0.51px #1c2433;transform:scaleX(0.8869);transform-origin:0 0;">NAME</div><div id="t82" class="t " style="left:468.00px;top:309.00px;font-size:12.81px;line-height:12.81px;color:#1c2433;-webkit-text-stroke:0.51px #1c2433;transform:scaleX(0.8409);transform-origin:0 0;">MESSAGES</div><div id="t83" class="t " style="left:548.70px;top:309.00px;font-size:12.81px;line-height:12.81px;color:#1c2433;-webkit-text-stroke:0.51px #1c2433;transform:scaleX(0.8488);transform-origin:0 0;">INITIATED FROM</div><div id="t84" class="t " style="left:763.20px;top:309.00px;font-size:12.81px;line-height:12.81px;color:#1c2433;-webkit-text-stroke:0.51px #1c2433;transform:scaleX(0.8744);transform-origin:0 0;">OWNER</div><div id="t85" class="t " style="left:873.20px;top:309.00px;font-size:12.81px;line-height:12.81px;color:#1c2433;-webkit-text-stroke:0.51px #1c2433;transform:scaleX(0.8507);transform-origin:0 0;">CUSTOMER</div><div id="t86" class="t " style="left:982.00px;top:309.00px;font-size:12.81px;line-height:12.81px;color:#1c2433;-webkit-text-stroke:0.51px #1c2433;transform:scaleX(0.8331);transform-origin:0 0;">CUSTOMER USER</div><div id="t87" class="t " style="left:1097.90px;top:309.00px;font-size:12.81px;line-height:12.81px;color:#1c2433;-webkit-text-stroke:0.51px #1c2433;transform:scaleX(0.8314);transform-origin:0 0;">STATUS</div><div id="t88" class="t " style="left:1159.40px;top:309.00px;font-size:12.81px;line-height:12.81px;color:#1c2433;-webkit-text-stroke:0.51px #1c2433;transform:scaleX(0.8247);transform-origin:0 0;">CREATED AT</div><div id="t89" class="t " style="left:1339.20px;top:309.00px;font-size:12.81px;line-height:12.81px;color:#3b5478;-webkit-text-stroke:0.51px #3b5478;transform:scaleX(0.8324);transform-origin:0 0;">LAST MESSAGE</div><svg class="r" style="left:1423.4px;top:308.0px" width="7" height="12" viewBox="0 0 7 12"><path d="M3.5 0 L6.8 4 H4.6 V12 H2.4 V4 H0.2 Z" fill="#34507a"/></svg><svg class="r" style="left:1771.6px;top:311.79999999999995px" width="13" height="4" viewBox="0 0 13 4"><rect x="0" y="0" width="3.4" height="3.4" rx="1.2" fill="#141a26"/><rect x="4.7" y="0" width="3.4" height="3.4" rx="1.2" fill="#141a26"/><rect x="9.4" y="0" width="3.4" height="3.4" rx="1.2" fill="#141a26"/></svg><div class="r" style="left:120px;top:337.4px;width:1692.2px;height:46px;background:#ffffff;"></div><div class="r" style="left:120px;top:383px;width:1692.2px;height:46px;background:#ffffff;"></div><div class="r" style="left:120px;top:428.70000000000005px;width:1692.2px;height:46px;background:#ffffff;"></div><div class="r" style="left:120px;top:382.20000000000005px;width:1692.2px;height:1.2px;background:#e7e9ec;"></div><div class="r" style="left:120px;top:428.0px;width:1692.2px;height:1.2px;background:#e7e9ec;"></div><div class="r" style="left:120px;top:473.0px;width:1692.2px;height:1.2px;background:#e7e9ec;"></div><div class="r" style="left:136.3px;top:351.8px;width:15.7px;height:15.4px;box-sizing:border-box;border:1px solid #777c87;border-radius:3px;background:#fff"></div><div id="t90" class="t " style="left:193.30px;top:353.01px;font-size:15.54px;line-height:15.54px;color:#1c2433;letter-spacing:-0.219px;">Regarding Order 20 Substitution</div><div id="t91" class="t " style="left:468.50px;top:353.01px;font-size:15.54px;line-height:15.54px;color:#1c2433;">0</div><div id="t92" class="t " style="left:549.60px;top:353.01px;font-size:15.54px;line-height:15.54px;color:#1c2433;letter-spacing:-0.159px;">Order <span class="lk">20</span></div><div id="t93" class="t " style="left:763.30px;top:353.01px;font-size:15.54px;line-height:15.54px;color:#1c2433;transform:scaleX(0.9173);transform-origin:0 0;">John Doe</div><div id="t94" class="t " style="left:873.20px;top:353.01px;font-size:15.54px;line-height:15.54px;color:#1c2433;letter-spacing:-0.412px;">Company A</div><div id="t95" class="t " style="left:982.00px;top:353.01px;font-size:15.54px;line-height:15.54px;color:#1c2433;letter-spacing:-0.492px;">Amanda Cole</div><div id="t96" class="t " style="left:1097.40px;top:353.01px;font-size:15.54px;line-height:15.54px;color:#1c2433;letter-spacing:-0.061px;">Active</div><div id="t97" class="t " style="left:1159.00px;top:353.01px;font-size:15.54px;line-height:15.54px;color:#1c2433;transform:scaleX(0.9085);transform-origin:0 0;">May 14, 2025, 3:09 PM</div><div id="t98" class="t " style="left:1339.00px;top:353.01px;font-size:15.54px;line-height:15.54px;color:#1c2433;letter-spacing:0.052px;"><span style="color:#b3b5b9">N/A</span></div><svg class="r" style="left:1773.8px;top:357px" width="13" height="4" viewBox="0 0 13 4"><rect x="0" y="0" width="3.4" height="3.4" rx="1.2" fill="#454a55"/><rect x="4.7" y="0" width="3.4" height="3.4" rx="1.2" fill="#454a55"/><rect x="9.4" y="0" width="3.4" height="3.4" rx="1.2" fill="#454a55"/></svg><div class="r" style="left:136.3px;top:396.8px;width:15.7px;height:15.4px;box-sizing:border-box;border:1px solid #777c87;border-radius:3px;background:#fff"></div><div id="t99" class="t " style="left:193.30px;top:398.01px;font-size:15.54px;line-height:15.54px;color:#1c2433;letter-spacing:-0.372px;">Order 25</div><div id="t100" class="t " style="left:468.50px;top:398.01px;font-size:15.54px;line-height:15.54px;color:#1c2433;">4</div><div id="t101" class="t " style="left:549.60px;top:398.01px;font-size:15.54px;line-height:15.54px;color:#1c2433;letter-spacing:-0.343px;">Order <span class="lk">25</span></div><div id="t102" class="t " style="left:763.30px;top:398.01px;font-size:15.54px;line-height:15.54px;color:#1c2433;transform:scaleX(0.9173);transform-origin:0 0;">John Doe</div><div id="t103" class="t " style="left:873.20px;top:398.01px;font-size:15.54px;line-height:15.54px;color:#1c2433;letter-spacing:-0.412px;">Company A</div><div id="t104" class="t " style="left:982.00px;top:398.01px;font-size:15.54px;line-height:15.54px;color:#1c2433;letter-spacing:-0.492px;">Amanda Cole</div><div id="t105" class="t " style="left:1097.40px;top:398.01px;font-size:15.54px;line-height:15.54px;color:#1c2433;letter-spacing:-0.061px;">Active</div><div id="t106" class="t " style="left:1159.00px;top:398.01px;font-size:15.54px;line-height:15.54px;color:#1c2433;transform:scaleX(0.9111);transform-origin:0 0;">May 29, 2025, 10:47 AM</div><div id="t107" class="t " style="left:1339.00px;top:398.01px;font-size:15.54px;line-height:15.54px;color:#1c2433;letter-spacing:-0.557px;">May 29, 2025, 10:56 AM from Customer User <span class="lk">Amanda Cole</span></div><svg class="r" style="left:1773.8px;top:402px" width="13" height="4" viewBox="0 0 13 4"><rect x="0" y="0" width="3.4" height="3.4" rx="1.2" fill="#454a55"/><rect x="4.7" y="0" width="3.4" height="3.4" rx="1.2" fill="#454a55"/><rect x="9.4" y="0" width="3.4" height="3.4" rx="1.2" fill="#454a55"/></svg><div class="r" style="left:136.3px;top:442.8px;width:15.7px;height:15.4px;box-sizing:border-box;border:1px solid #777c87;border-radius:3px;background:#fff"></div><div id="t108" class="t " style="left:193.30px;top:444.01px;font-size:15.54px;line-height:15.54px;color:#1c2433;letter-spacing:-0.385px;">Request for Quote Isabel Martin</div><div id="t109" class="t " style="left:468.50px;top:444.01px;font-size:15.54px;line-height:15.54px;color:#1c2433;">1</div><div id="t110" class="t " style="left:549.60px;top:444.01px;font-size:15.54px;line-height:15.54px;color:#1c2433;letter-spacing:-0.495px;">Customer User <span class="lk">Isabel Martin</span></div><div id="t111" class="t " style="left:763.30px;top:444.01px;font-size:15.54px;line-height:15.54px;color:#1c2433;transform:scaleX(0.9173);transform-origin:0 0;">John Doe</div><div id="t112" class="t " style="left:873.20px;top:444.01px;font-size:15.54px;line-height:15.54px;color:#1c2433;transform:scaleX(0.9033);transform-origin:0 0;">Anonymous 1</div><div id="t113" class="t " style="left:982.00px;top:444.01px;font-size:15.54px;line-height:15.54px;color:#1c2433;letter-spacing:-0.501px;">Isabel Martin</div><div id="t114" class="t " style="left:1097.40px;top:444.01px;font-size:15.54px;line-height:15.54px;color:#1c2433;letter-spacing:-0.061px;">Active</div><div id="t115" class="t " style="left:1159.00px;top:444.01px;font-size:15.54px;line-height:15.54px;color:#1c2433;transform:scaleX(0.8968);transform-origin:0 0;">May 29, 2025, 10:41 AM</div><div id="t116" class="t " style="left:1339.00px;top:444.01px;font-size:15.54px;line-height:15.54px;color:#1c2433;transform:scaleX(0.9022);transform-origin:0 0;">May 29, 2025, 10:41 AM from User <span class="lk">John Doe</span></div><svg class="r" style="left:1773.8px;top:448px" width="13" height="4" viewBox="0 0 13 4"><rect x="0" y="0" width="3.4" height="3.4" rx="1.2" fill="#454a55"/><rect x="4.7" y="0" width="3.4" height="3.4" rx="1.2" fill="#454a55"/><rect x="9.4" y="0" width="3.4" height="3.4" rx="1.2" fill="#454a55"/></svg><div class="r" style="left:1836px;top:0px;width:16px;height:626px;background:#ece6dc;"></div></div><div class="r" style="left:1574px;top:611px;width:215px;height:53.5px;box-sizing:border-box;border:3px solid #74103a"></div><svg class="r" style="left:0;top:0" width="2001" height="1086" viewBox="0 0 2001 1086"><line x1="1674.5" y1="176.3" x2="1156" y2="585" stroke="#79133a" stroke-width="4.4"/><path d="M1148.1 591.9 L1153.8 579.6 L1156.2 585.6 L1161.6 589.4 Z" fill="#79133a"/></svg></body></html>
